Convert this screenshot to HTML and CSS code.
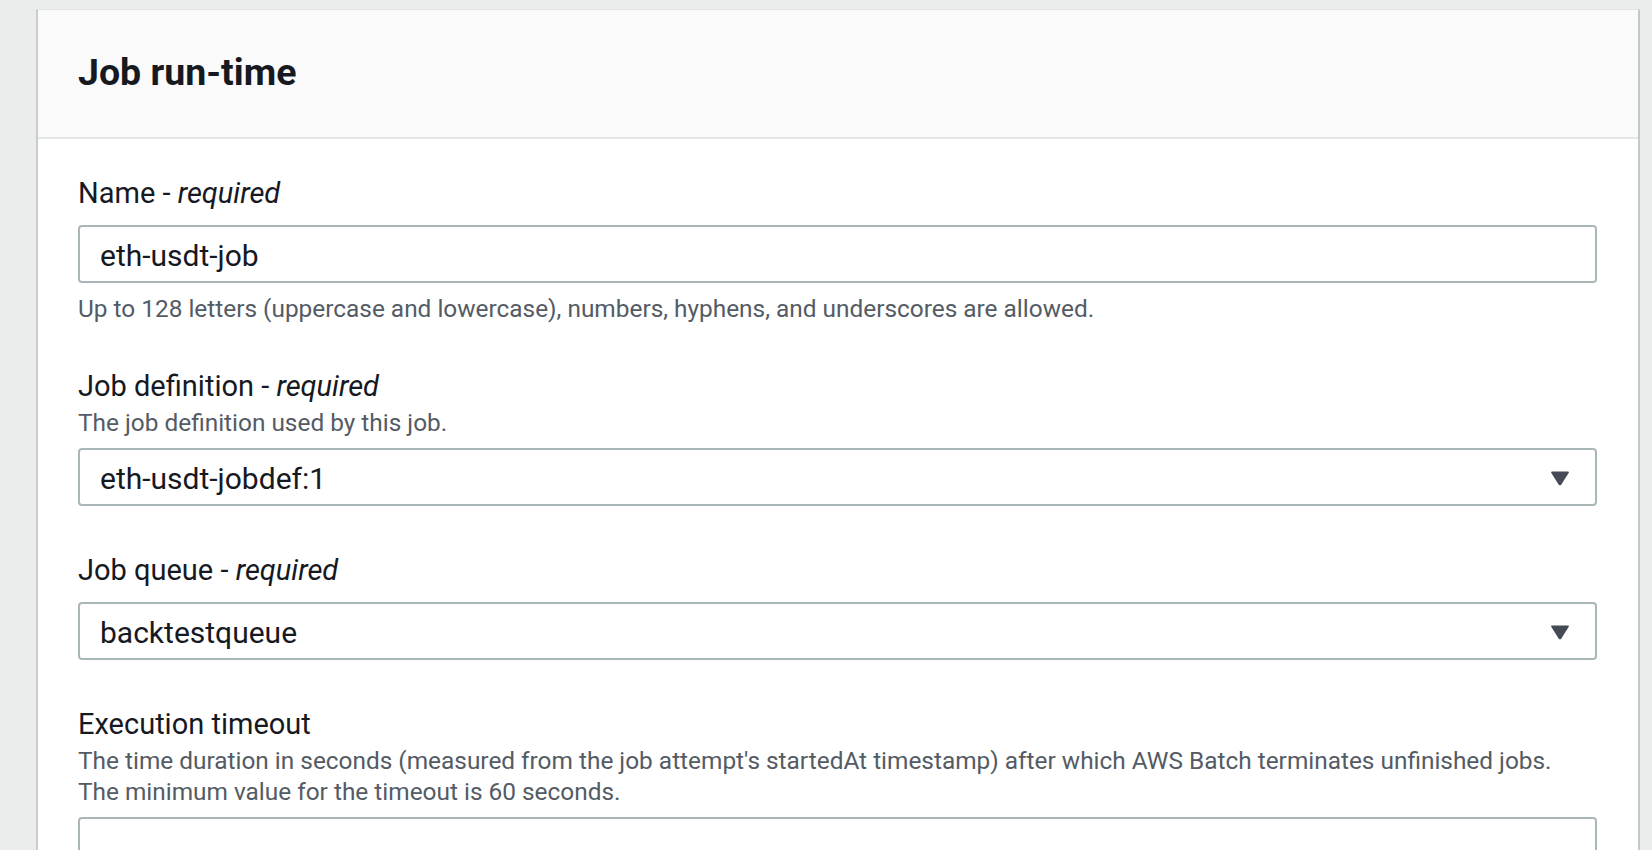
FILE: index.html
```html
<!DOCTYPE html>
<html lang="en">
<head>
<meta charset="utf-8">
<title>Job run-time</title>
<link rel="stylesheet" href="styles.css">
</head>
<body>
<div class="page">
  <section class="panel">
    <header class="panel-header">
      <h2 class="panel-title">Job run-time</h2>
    </header>
    <div class="panel-body">
      <div class="field">
        <div class="field-label">Name - <em>required</em></div>
        <div class="control input">eth-usdt-job</div>
        <div class="constraint">Up to 128 letters (uppercase and lowercase), numbers, hyphens, and underscores are allowed.</div>
      </div>
      <div class="field">
        <div class="field-label">Job definition - <em>required</em></div>
        <div class="field-desc">The job definition used by this job.</div>
        <div class="control select">
          <span class="select-value">eth-usdt-jobdef:1</span>
          <svg class="caret" width="20" height="16" viewBox="0 0 20 16" aria-hidden="true"><path d="M2.2 1.5 H17.8 Q19.6 1.5 18.6 3.1 L11.4 14.4 Q10 16.2 8.6 14.4 L1.4 3.1 Q0.4 1.5 2.2 1.5 Z"/></svg>
        </div>
      </div>
      <div class="field">
        <div class="field-label">Job queue - <em>required</em></div>
        <div class="control select">
          <span class="select-value">backtestqueue</span>
          <svg class="caret" width="20" height="16" viewBox="0 0 20 16" aria-hidden="true"><path d="M2.2 1.5 H17.8 Q19.6 1.5 18.6 3.1 L11.4 14.4 Q10 16.2 8.6 14.4 L1.4 3.1 Q0.4 1.5 2.2 1.5 Z"/></svg>
        </div>
      </div>
      <div class="field">
        <div class="field-label">Execution timeout</div>
        <div class="field-desc">The time duration in seconds (measured from the job attempt's startedAt timestamp) after which AWS Batch terminates unfinished jobs.<br>The minimum value for the timeout is 60 seconds.</div>
        <div class="control input"></div>
      </div>
    </div>
  </section>
</div>
</body>
</html>
```

FILE: styles.css
```css
html, body {
  margin: 0;
  padding: 0;
  background: #ebeded;
  height: 100%;
  overflow: hidden;
}

body {
  font-family: Roboto, "Liberation Sans", Arial, sans-serif;
  color: #16191f;
}

.page {
  padding: 9px 12px 0 36px;
}

.panel {
  background: #ffffff;
  border-top: 1px solid #e2e5e5;
  border-left: 2px solid #c8cdce;
  border-right: 2px solid #c3c9ca;
  min-height: 900px;
}

.panel-header {
  background: #fafafa;
  border-bottom: 2px solid #e3e6e6;
  padding: 40px 40px 0 40px;
  height: 87px;
}

.panel-title {
  margin: 0;
  font-size: 37.5px;
  line-height: 44px;
  font-weight: 700;
  color: #16191f;
}

.panel-body {
  padding: 36px 41px 0 40px;
  display: flex;
  flex-direction: column;
  gap: 46px;
}

.field {
  display: flex;
  flex-direction: column;
}

.field-label {
  font-size: 29px;
  line-height: 36px;
  color: #16191f;
}

.field-label em {
  font-style: italic;
}

.field-desc {
  font-size: 24.4px;
  line-height: 31px;
  margin-top: 3px;
  color: #545b64;
  white-space: nowrap;
}

.constraint {
  font-size: 24.4px;
  line-height: 30px;
  color: #545b64;
  margin-top: 11px;
  margin-bottom: -2px;
}

.control {
  margin-top: 14px;
  height: 52px;
  border: 2px solid #aab7b8;
  border-radius: 4px;
  background: #ffffff;
  display: flex;
  align-items: center;
  padding: 2px 25px 0 20px;
  font-size: 30px;
  color: #16191f;
  box-sizing: content-box;
}

.field-desc + .control {
  margin-top: 10px;
}

.select {
  justify-content: space-between;
}

.caret {
  fill: #454b54;
  flex: none;
}
```
